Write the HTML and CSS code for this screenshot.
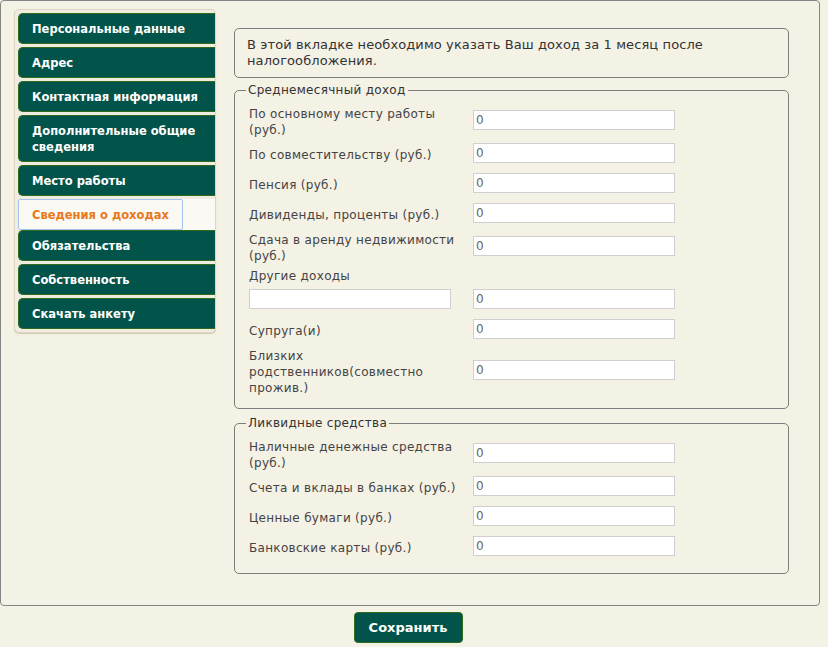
FILE: index.html
```html
<!DOCTYPE html>
<html lang="ru">
<head>
  <meta charset="UTF-8" />
  <meta name="viewport" content="width=device-width, initial-scale=1.0"/>
  <title>Анкета — Сведения о доходах</title>
  <link rel="stylesheet" href="styles.css">
</head>
<body>

  <div class="frame">
    <div class="side">
      <ul class="tabs">
        <li><a href="#">Персональные данные</a></li>
        <li><a href="#">Адрес</a></li>
        <li><a href="#">Контактная информация</a></li>
        <li class="tall"><a href="#">Дополнительные общие сведения</a></li>
        <li><a href="#">Место работы</a></li>
        <li class="active"><a href="#">Сведения о доходах</a></li>
        <li><a href="#">Обязательства</a></li>
        <li><a href="#">Собственность</a></li>
        <li><a href="#">Скачать анкету</a></li>
      </ul>
    </div>

    <div class="main">
      <div class="note">В этой вкладке необходимо указать Ваш доход за 1 месяц после налогообложения.</div>

      <fieldset class="group">
        <legend>Среднемесячный доход</legend>
        <div class="row">
          <label>По основному месту работы (руб.)</label>
          <input type="text" value="0" />
        </div>
        <div class="row">
          <label>По совместительству (руб.)</label>
          <input type="text" value="0" />
        </div>
        <div class="row">
          <label>Пенсия (руб.)</label>
          <input type="text" value="0" />
        </div>
        <div class="row">
          <label>Дивиденды, проценты (руб.)</label>
          <input type="text" value="0" />
        </div>
        <div class="row">
          <label>Сдача в аренду недвижимости (руб.)</label>
          <input type="text" value="0" />
        </div>
        <div class="row row-head">
          <label>Другие доходы</label>
        </div>
        <div class="row">
          <input type="text" class="other" value="" />
          <input type="text" value="0" />
        </div>
        <div class="row">
          <label>Супруга(и)</label>
          <input type="text" value="0" />
        </div>
        <div class="row">
          <label>Близких родственников(совместно прожив.)</label>
          <input type="text" value="0" />
        </div>
      </fieldset>

      <fieldset class="group">
        <legend>Ликвидные средства</legend>
        <div class="row">
          <label>Наличные денежные средства (руб.)</label>
          <input type="text" value="0" />
        </div>
        <div class="row">
          <label>Счета и вклады в банках (руб.)</label>
          <input type="text" value="0" />
        </div>
        <div class="row">
          <label>Ценные бумаги (руб.)</label>
          <input type="text" value="0" />
        </div>
        <div class="row">
          <label>Банковские карты (руб.)</label>
          <input type="text" value="0" />
        </div>
      </fieldset>
    </div>
  </div>

  <div class="actions">
    <button class="save">Сохранить</button>
  </div>

</body>
</html>
```

FILE: styles.css
```css
body {
  margin: 0;
  font-family: "DejaVu Sans", Verdana, sans-serif;
  font-size: 12px;
  background-color: #f4f1e5;
  color: #444;
}

.frame {
  box-sizing: border-box;
  width: 820px;
  height: 606px;
  border: 1px solid #858585;
  border-radius: 4px;
  display: flex;
  align-items: flex-start;
  padding-left: 13px;
}

/* left menu */

.side {
  box-sizing: border-box;
  width: 202px;
  margin-top: 8px;
  padding: 3px 0 3px 3px;
  border: 1px solid #dcd5bf;
  border-radius: 5px;
  background: #f0ede0;
  box-shadow: 0 1px 1px #d2cab2;
}

.tabs {
  list-style: none;
  margin: 0;
  padding: 0;
}

.tabs li {
  margin-bottom: 3px;
}

.tabs li:last-child {
  margin-bottom: 0;
}

.tabs li a {
  box-sizing: border-box;
  display: flex;
  align-items: center;
  height: 31px;
  padding: 0 2px 0 13px;
  background-color: #02544a;
  border: 1px solid #2f6d1c;
  border-right: none;
  border-radius: 5px 0 0 5px;
  color: #fff;
  font-weight: bold;
  font-size: 11.5px;
  line-height: 16px;
  text-decoration: none;
  white-space: nowrap;
}

.tabs li.tall a {
  height: 47px;
  white-space: normal;
}

.tabs li.active {
  margin-bottom: 0;
  background: #faf9f3;
}

.tabs li.active a {
  width: 165px;
  background: #faf9f3;
  border: 1px solid #a6c3ee;
  border-radius: 2px;
  color: #e8781c;
}

/* form column */

.main {
  width: 555px;
  margin: 27px 0 0 18px;
}

.note {
  border: 1px solid #7c7c7c;
  border-radius: 5px;
  padding: 8px 12px 8px 12px;
  line-height: 16px;
  font-size: 13px;
  letter-spacing: 0.1px;
  color: #333;
}

.group {
  margin: 4px 0 0 0;
  padding: 4px 14px 12px 14px;
  border: 1px solid #7c7c7c;
  border-radius: 5px;
}

.group + .group {
  margin-top: 6px;
}

.group legend {
  margin-left: -3px;
  padding: 0 2px;
  line-height: 16px;
  letter-spacing: 0.3px;
  color: #333;
}

.row {
  display: flex;
  align-items: center;
  min-height: 30px;
}

.row label {
  width: 210px;
  padding-top: 4px;
  line-height: 16px;
  letter-spacing: 0.3px;
}

.row.row-head {
  min-height: 20px;
}

.row input {
  box-sizing: border-box;
  width: 202px;
  height: 20px;
  margin: 0 0 0 14px;
  padding: 0 2px;
  border: 1px solid #cfcfcf;
  background: #fff;
  font-family: "DejaVu Sans", sans-serif;
  font-size: 12px;
  color: #666;
  outline: none;
}

.row input.other {
  margin: 0 8px 0 0;
}

/* bottom */

.actions {
  width: 816px;
  display: flex;
  justify-content: center;
  padding-top: 6px;
}

.save {
  width: 109px;
  height: 31px;
  background-color: #02544a;
  border: 1px solid #2f6d1c;
  border-radius: 4px;
  color: #fff;
  font-family: "DejaVu Sans", sans-serif;
  font-weight: bold;
  font-size: 13px;
  cursor: pointer;
}
```
